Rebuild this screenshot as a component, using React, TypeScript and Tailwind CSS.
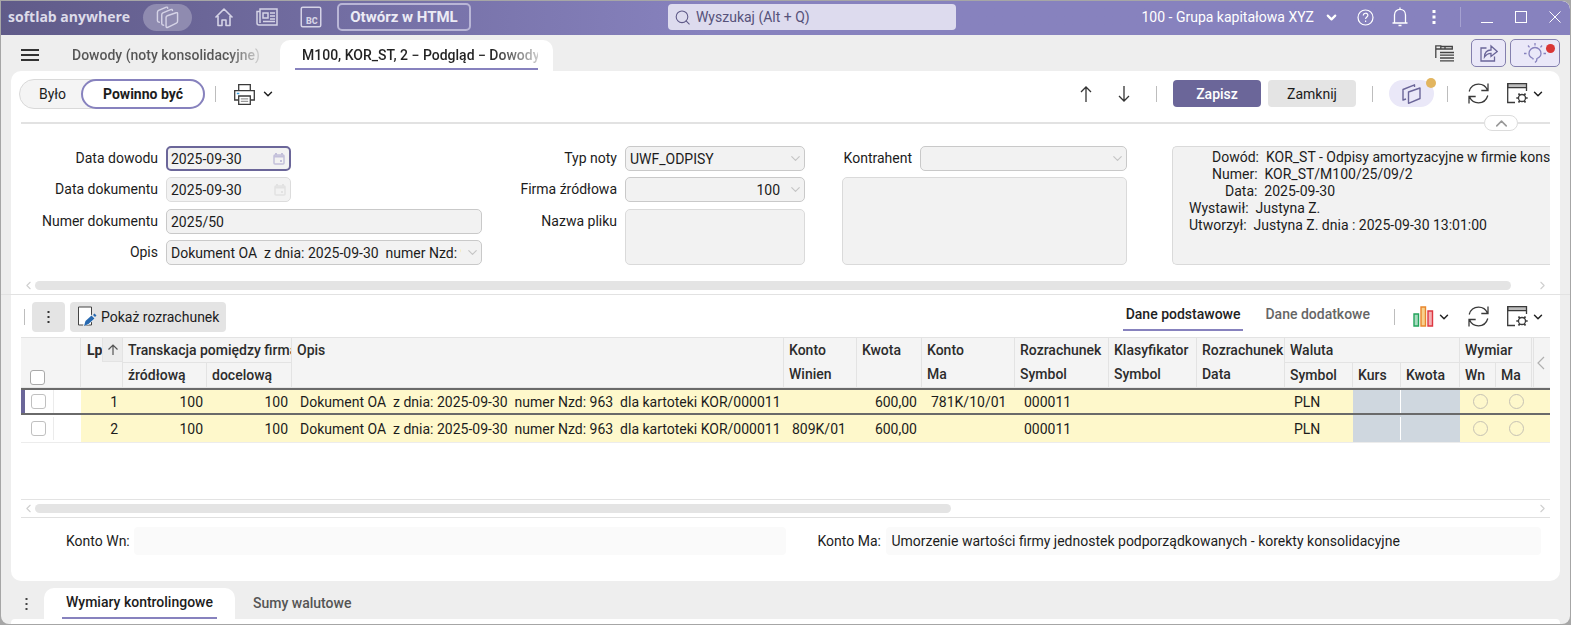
import type { ReactNode } from 'react';
import { ChevronDown, ChevronLeft, ChevronRight, ChevronUp, Search } from 'lucide-react';

const infoLines = [
  { label: 'Dowód:', value: 'KOR_ST - Odpisy amortyzacyjne w firmie konso', indent: 'pl-[39px]' },
  { label: 'Numer:', value: 'KOR_ST/M100/25/09/2', indent: 'pl-[39px]' },
  { label: 'Data:', value: '2025-09-30', indent: 'pl-[52px]' },
  { label: 'Wystawił:', value: 'Justyna Z.', indent: 'pl-4' },
  { label: 'Utworzył:', value: 'Justyna Z. dnia : 2025-09-30 13:01:00', indent: 'pl-4' },
];

const rows = [
  { lp: 1, from: '100', to: '100', opis: 'Dokument OA  z dnia: 2025-09-30  numer Nzd: 963  dla kartoteki KOR/000011', winien: '', kwota: '600,00', ma: '781K/10/01', symbol: '000011', waluta: 'PLN', active: true },
  { lp: 2, from: '100', to: '100', opis: 'Dokument OA  z dnia: 2025-09-30  numer Nzd: 963  dla kartoteki KOR/000011', winien: '809K/01', kwota: '600,00', ma: '', symbol: '000011', waluta: 'PLN', active: false },
];

const columns = [
  'w-[33px]', 'w-[27px]', 'w-[42px]', 'w-[84px]', 'w-[85px]', '', 'w-[73px]', 'w-[65px]', 'w-[93px]', 'w-[94px]',
  'w-[88px]', 'w-[88px]', 'w-[68px]', 'w-[48px]', 'w-[59px]', 'w-[36px]', 'w-[36px]', 'w-[2px]', 'w-[16px]',
];

function Divider({ className = '' }: { className?: string }) {
  return <span className={`w-px h-4 bg-[#bdbdbd] ${className}`} />;
}

function PagesIcon() {
  return (
    <svg width="23" height="23" viewBox="0 0 24 24" fill="none" stroke="#d5d3e6" strokeWidth="1.500" strokeLinejoin="round" strokeLinecap="round">
      <path d="M10.500 12c0-1 .5-1.500 1.300-1.800L21 7c1-.3 1.500 0 1.500 1v8c0 1-.3 1.500-1.200 1.900l-9 4.300c-1.200.5-1.800.1-1.800-1z" />
      <path d="M8 20c-1.500 0-2-.5-2-1.500V9c0-1 .4-1.500 1.200-1.900l8-3.300c1.300-.5 2-.2 2 1" />
      <path d="M3.500 17c-1.500 0-2-.5-2-1.500V6.500c0-1 .4-1.500 1.200-1.900l7.500-3.200c1.300-.5 2-.2 2 1" />
    </svg>
  );
}

function HomeIcon() {
  return (
    <svg width="20" height="20" viewBox="0 0 20 20" fill="none" stroke="#d5d3e6" strokeWidth="1.600" strokeLinejoin="round">
      <path d="M1.500 10.500 10 2l8.500 8.500M4 9v9.500h4V13h4v5.500h4V9" />
    </svg>
  );
}

function NewsIcon() {
  return (
    <svg width="22" height="18" viewBox="0 0 22 18" fill="none" stroke="#d5d3e6" strokeWidth="1.500">
      <path d="M4 3.500V1h17v16H3a2 2 0 0 1-2-2V3.500h3V15" />
      <path d="M7 5h5v5H7zM14 5h5M14 8h5M14 11h5M7 13.500h12" />
    </svg>
  );
}

function BcIcon() {
  return (
    <svg width="22" height="22" viewBox="0 0 22 22" fill="none">
      <rect x="1.250" y="1.250" width="19.500" height="19.500" rx="1.500" stroke="#d5d3e6" strokeWidth="1.500" />
      <text x="6" y="17.500" fontSize="9" fontWeight="900" fontFamily="Roboto, sans-serif" fill="#d5d3e6">BC</text>
    </svg>
  );
}

function PrinterIcon() {
  return (
    <svg width="21" height="21" viewBox="0 0 21 21" fill="none" stroke="#3a3a3a" strokeWidth="1.300">
      <path d="M4.700 6.500V.7h11.600v5.800M4.500 16H.7V6.700h19.600V16h-3.800" />
      <path d="M4.700 12h11.600v8.300H4.700z" fill="#fff" />
      <path d="M6.800 14.800h7.400M6.800 17.300h7.400" stroke="#999" />
      <path d="M2.800 9.500h2.500" stroke="#3b9fe0" />
    </svg>
  );
}

function RefreshIcon() {
  return (
    <svg width="21" height="21" viewBox="0 0 21 21" fill="none" stroke="#3a3a3a" strokeWidth="1.300">
      <path d="M1.200 8.500C2.500 4 6 1.200 10.500 1.200c4 0 7.500 2.300 9 6M20 .5v7h-6.700" />
      <path d="M19.800 12.500c-1.300 4.500-4.800 7.300-9.300 7.300-4 0-7.500-2.300-9-6M1 20.500v-7h6.700" />
    </svg>
  );
}

function WindowGearIcon() {
  return (
    <svg width="21" height="21" viewBox="0 0 21 21" fill="none" stroke="#3a3a3a" strokeWidth="1.300">
      <path d="M.7.7h18.800v4H.7z" fill="#bdbdbd" />
      <path d="M.7.700v18.800H8M19.500 4.700V8" />
      <circle cx="15" cy="15" r="3.500" />
      <path d="m12.800 12.200-1.300-1.800M17.200 12.200l1.300-1.800M12.800 17.800l-1.300 1.800M17.200 17.800l1.300 1.800M11.500 15H9.300M18.500 15h2.200" strokeWidth="1.700" />
    </svg>
  );
}

function CalendarIcon({ color }: { color: string }) {
  return (
    <svg width="12" height="12" viewBox="0 0 12 12" fill="none" stroke={color} strokeWidth="1.500" aria-hidden="true">
      <rect x="1" y="2" width="10" height="9" rx="1" />
      <path d="M1 3.500h10" strokeWidth="2" />
      <path d="M3 0v2M9 0v2M7 8h2" strokeWidth="2" />
    </svg>
  );
}

function ToolMenu({ label, children }: { label: string; children: ReactNode }) {
  return (
    <button type="button" aria-label={label} className="flex items-center gap-[3px]">
      {children}
      <ChevronDown size={14} strokeWidth={2.5} color="#222" />
    </button>
  );
}

function Field({ id, label, labelClass, children }: { id: string; label: string; labelClass: string; children: ReactNode }) {
  return (
    <div className="flex gap-2">
      <label htmlFor={id} className={`shrink-0 h-[25px] leading-[25px] text-right whitespace-nowrap ${labelClass}`}>{label}</label>
      {children}
    </div>
  );
}

function SelectBox({ id, value, className, right = false }: { id: string; value: string; className: string; right?: boolean }) {
  return (
    <div className={`relative ${className}`}>
      <select
        id={id}
        className={`w-full h-[25px] pl-1 appearance-none rounded-[5px] border border-[#c9c9c9] bg-[#f2f2f2] ${right ? 'pr-6 text-right' : 'pr-5'}`}
      >
        <option>{value}</option>
      </select>
      <ChevronDown size={15} strokeWidth={1.8} color="#c4c4c4" className="absolute right-0.5 top-[5px] pointer-events-none" />
    </div>
  );
}

function DateBox({ id, focused = false }: { id: string; focused?: boolean }) {
  return (
    <div
      className={`w-[125px] h-[25px] pr-1 flex items-center rounded-[5px] bg-[#f2f2f2] ${focused ? 'border-2 border-[#6b6699] pl-[3px]' : 'border border-[#dcdcdc] pl-1'}`}
    >
      <input id={id} type="text" defaultValue="2025-09-30" className="w-full min-w-0 bg-transparent outline-none" />
      <button type="button" aria-label="Kalendarz">
        <CalendarIcon color={focused ? '#c3c0da' : '#e2e2e2'} />
      </button>
    </div>
  );
}

function ScrollTrack({ children }: { children: ReactNode }) {
  return (
    <div className="flex items-center h-[17px] px-px">
      <ChevronLeft size={13} color="#cfcfcf" />
      <div className="flex-1 flex">{children}</div>
      <ChevronRight size={13} color="#cfcfcf" />
    </div>
  );
}

function TitleBar() {
  return (
    <header className="h-[34px] pb-0.5 flex items-center rounded-tr-lg bg-linear-to-r from-[#605b89] to-[#8782be] to-45% text-white">
      <div className="flex-1 flex items-center pl-[7px]">
        <span className="w-[135px] font-['Open_Sans',sans-serif] font-bold text-sm text-[#dddbe9] whitespace-nowrap">softlab anywhere</span>
        <button type="button" aria-label="Moduły" className="w-[49px] h-[27px] rounded-full bg-[#8f8bb0] flex items-center justify-center"><PagesIcon /></button>
        <nav className="flex items-center gap-[22px] ml-[22px]">
          <a href="#start" aria-label="Start"><HomeIcon /></a>
          <a href="#news" aria-label="Aktualności"><NewsIcon /></a>
          <a href="#bc" aria-label="BC"><BcIcon /></a>
        </nav>
        <button type="button" className="ml-[15px] w-[134px] h-7 rounded-[5px] border-2 border-[#b9b6d6] font-bold text-[15px] leading-5 text-[#ecebf5]">Otwórz w HTML</button>
      </div>
      <label className="w-[288px] h-[26px] ml-[54px] rounded bg-[#dddbee] flex items-center px-1.5 gap-[5px]">
        <Search size={19} strokeWidth={1.5} color="#5f5a88" />
        <input type="search" aria-label="Wyszukaj" placeholder="Wyszukaj (Alt + Q)" className="w-full bg-transparent outline-none text-sm placeholder:text-[#56527a]" />
      </label>
      <div className="flex-1 flex items-center justify-end pr-[9px]">
        <button type="button" className="flex items-center gap-2.5 text-sm whitespace-nowrap">
          100 - Grupa kapitałowa XYZ
          <ChevronDown size={15} strokeWidth={3.5} />
        </button>
        <button type="button" aria-label="Pomoc" className="ml-[18px]">
          <svg width="17" height="17" viewBox="0 0 17 17" fill="none" stroke="#fff" strokeWidth="1.200">
            <circle cx="8.500" cy="8.500" r="7.500" />
            <path d="M6.300 6.500c0-3 4.600-3 4.600-.2 0 1.600-2.300 1.700-2.300 3.700M8.600 11.500v1.500" />
          </svg>
        </button>
        <button type="button" aria-label="Powiadomienia" className="ml-[18px]">
          <svg width="16" height="20" viewBox="0 0 16 20" fill="none" stroke="#fff" strokeWidth="1.300">
            <path d="M.5 16h15M2.500 16V8c0-7.500 11-7.500 11 0v8M6.500 18.500h3M8 .5v2" />
          </svg>
        </button>
        <button type="button" aria-label="Więcej" className="ml-[24px] mr-6">
          <svg width="4" height="14" viewBox="0 0 4 14" fill="#fff"><path d="M.5 0h3v3h-3zM.5 5.500h3v3h-3zM.5 11h3v3h-3z" /></svg>
        </button>
        <span className="w-px h-5 bg-[#a5a1d0]" />
        <button type="button" aria-label="Minimalizuj" className="ml-5 w-3 h-3 border-b border-white" />
        <button type="button" aria-label="Maksymalizuj" className="ml-[22px] w-3 h-3 border border-white" />
        <button type="button" aria-label="Zamknij okno" className="ml-[22px]">
          <svg width="12" height="12" viewBox="0 0 12 12" stroke="#fff"><path d="m.5.5 11 11M11.500.5l-11 11" /></svg>
        </button>
      </div>
    </header>
  );
}

function TabBar() {
  return (
    <div className="h-9 flex items-end pl-5 pr-2.5">
      <button type="button" aria-label="Menu" className="w-[18px] mb-2.5 flex flex-col gap-[3px]">
        <span className="h-0.5 bg-[#333]" />
        <span className="h-0.5 bg-[#333]" />
        <span className="h-0.5 bg-[#333]" />
      </button>
      <div role="tablist" className="flex items-end ml-[33px] h-full text-sm font-medium">
        <button
          type="button"
          role="tab"
          className="w-[208px] h-8 text-left whitespace-nowrap bg-linear-to-r from-[#555] from-75% to-[#d0d0d0] to-90% bg-clip-text text-transparent"
        >
          Dowody (noty konsolidacyjne)
        </button>
        <button type="button" role="tab" aria-selected="true" className="w-[273px] h-[31px] rounded-t-[10px] bg-white px-[15px]">
          <span className="block h-[29px] pl-[7px] border-b-2 border-[#8782be] leading-[29px] text-left">
            <span className="block whitespace-nowrap bg-linear-to-r from-[#222] from-80% to-[#ccc] bg-clip-text text-transparent">M100, KOR_ST, 2 − Podgląd − Dowody</span>
          </span>
        </button>
      </div>
      <div className="flex-1 flex items-center justify-end h-full">
        <button type="button" aria-label="Widok" className="mr-[17px]">
          <svg width="19" height="17" viewBox="0 0 19 17" fill="none" stroke="#444" strokeWidth="1.300">
            <path d="M.8 13V.800h5V4h-5M5.800 1.500h11.500V4H5.800M10 1.500v2M5 7.500h14M5 10.200h14M5 13h14M5 15.800h14" />
          </svg>
        </button>
        <button type="button" aria-label="Udostępnij" className="w-[35px] h-7 mr-1 rounded-[5px] border border-[#8480ae] bg-[#eae8f8] flex items-center justify-center">
          <svg width="18" height="18" viewBox="0 0 18 18" fill="none" stroke="#6b6699" strokeWidth="1.300">
            <path d="M6.500 4H1v13h13.500v-4.500" />
            <path d="M4.500 13c.2-4.500 3-7 6.500-7V2l6.200 5.500L11 12.500V9.300c-2.500 0-4.700 1-6.500 3.700z" />
          </svg>
        </button>
        <button type="button" aria-label="Podpowiedzi" className="relative w-[50px] h-7 rounded-[5px] border border-[#8480ae] bg-[#eae8f8] flex items-center justify-center">
          <svg width="22" height="20" viewBox="0 0 22 20" fill="none" stroke="#8782be" strokeWidth="1.300">
            <path d="M9 16.500v-1c-2.500-1-4-3-4-5a6 6 0 0 1 12 0c0 2-1.500 4-4 5l-.5 2.500-1.500 1.500" />
            <path d="M11 0v2.500M4 2.500l1.500 1.800M18 2.500l-1.500 1.800M0 10.500h2.500M22 10.500h-2.500" />
          </svg>
          <span className="absolute right-1 top-1 w-[9px] h-[9px] rounded-full bg-[#d93636]" />
        </button>
      </div>
    </div>
  );
}

function Toolbar() {
  return (
    <div className="h-[52px] pt-2 flex items-start pl-2 pr-[15px]">
      <div className="w-[186px] h-[30px] flex rounded-full border border-[#d9d9d9] bg-[#f4f4f4] text-sm">
        <button type="button" className="flex-1 pl-1">Było</button>
        <button type="button" className="-my-px -mr-px w-[124px] h-[30px] rounded-full border-2 border-[#8782be] bg-white font-bold">Powinno być</button>
      </div>
      <div className="h-[30px] flex items-center">
        <Divider className="ml-2.5 mr-[18px]" />
        <button type="button" aria-label="Drukuj" className="flex items-center gap-1.5">
          <PrinterIcon />
          <ChevronDown size={14} strokeWidth={2.5} color="#222" />
        </button>
      </div>
      <div className="flex-1 h-[29px] flex items-center justify-end text-sm">
        <button type="button" aria-label="Poprzedni">
          <svg width="12" height="16" viewBox="0 0 12 16" fill="none" stroke="#333" strokeWidth="1.300"><path d="M6 16V1M1 6l5-5 5 5" /></svg>
        </button>
        <button type="button" aria-label="Następny" className="ml-[26px]">
          <svg width="12" height="16" viewBox="0 0 12 16" fill="none" stroke="#333" strokeWidth="1.300"><path d="M6 0v15M1 10l5 5 5-5" /></svg>
        </button>
        <Divider className="ml-[26px] mr-4" />
        <button type="button" className="w-[88px] h-[27px] rounded bg-[#6b6699] text-white font-medium">Zapisz</button>
        <button type="button" className="ml-[7px] w-[88px] h-[27px] rounded bg-[#e4e4e4]">Zamknij</button>
        <Divider className="mx-4" />
        <button type="button" aria-label="Kopiuj" className="relative w-[45px] h-[27px] rounded-full bg-[#eae8f8] flex items-center justify-center">
          <svg width="19" height="20" viewBox="0 0 19 20" fill="none" stroke="#6b6699" strokeWidth="1.400" strokeLinejoin="round">
            <path d="M6.500 8 18 4v10.500L6.500 19.300z" />
            <path d="M4 15 1 16V5.500L12.500.8V3" />
          </svg>
          <span className="absolute -right-0.5 -top-0.5 w-[10px] h-[10px] rounded-full bg-[#e2b55f]" />
        </button>
        <Divider className="ml-[13px] mr-5" />
        <button type="button" aria-label="Odśwież" className="mr-[18px]"><RefreshIcon /></button>
        <ToolMenu label="Ustawienia widoku"><WindowGearIcon /></ToolMenu>
      </div>
    </div>
  );
}

function DocumentForm() {
  return (
    <form className="flex px-2.5 pt-[15px] text-sm text-[#1c1c1c]">
      <div className="w-[461px] shrink-0 grid grid-rows-[25px_26px_25px_25px] gap-y-1.5">
        <Field id="data-dowodu" label="Data dowodu" labelClass="w-[137px]"><DateBox id="data-dowodu" focused /></Field>
        <Field id="data-dokumentu" label="Data dokumentu" labelClass="w-[137px]"><DateBox id="data-dokumentu" /></Field>
        <Field id="numer" label="Numer dokumentu" labelClass="w-[137px]">
          <input id="numer" type="text" defaultValue="2025/50" className="flex-1 h-[25px] px-1 rounded-[5px] border border-[#c9c9c9] bg-[#f2f2f2]" />
        </Field>
        <Field id="opis" label="Opis" labelClass="w-[137px]">
          <SelectBox id="opis" value={'Dokument OA \u00a0z dnia: 2025-09-30 \u00a0numer Nzd: 963 \u00a0dla kartoteki KOR/000011'} className="w-[316px]" />
        </Field>
      </div>
      <div className="w-[323px] shrink-0 grid grid-rows-[25px_26px_56px] gap-y-1.5">
        <Field id="typ" label="Typ noty" labelClass="w-[135px]"><SelectBox id="typ" value="UWF_ODPISY" className="flex-1" /></Field>
        <Field id="firma" label="Firma źródłowa" labelClass="w-[135px]"><SelectBox id="firma" value="100" right className="flex-1" /></Field>
        <Field id="plik" label="Nazwa pliku" labelClass="w-[135px]">
          <textarea id="plik" className="flex-1 h-14 resize-none rounded-[5px] border border-[#dadada] bg-[#f2f2f2]" />
        </Field>
      </div>
      <div className="w-[285px] ml-[37px] shrink-0 grid grid-rows-[25px_88px] gap-y-1.5">
        <Field id="kontrahent" label="Kontrahent" labelClass="w-[70px]"><SelectBox id="kontrahent" value="" className="flex-1" /></Field>
        <textarea aria-label="Dane kontrahenta" className="resize-none rounded-[5px] border border-[#dadada] bg-[#f2f2f2]" />
      </div>
      <div className="flex-1 min-w-0 ml-[45px] pt-0.5 overflow-hidden rounded-l-[5px] border border-r-0 border-[#dadada] bg-[#f2f2f2] whitespace-pre leading-[17px]">
        {infoLines.map((line) => (
          <p key={line.label} className={line.indent}>{line.label}  {line.value}</p>
        ))}
      </div>
    </form>
  );
}

function GridToolbar() {
  return (
    <div className="h-[42px] pt-px flex items-center pl-[13px] pr-[15px] text-sm">
      <Divider />
      <button type="button" aria-label="Menu tabeli" className="ml-[7px] w-[33px] h-[30px] rounded bg-[#e4e4e4] flex items-center justify-center">
        <svg width="3" height="12" viewBox="0 0 3 12" fill="#333"><path d="M.5 0h2v2h-2zM.5 5h2v2h-2zM.5 10h2v2h-2z" /></svg>
      </button>
      <button type="button" className="ml-[5px] h-[30px] px-[7px] rounded bg-[#e4e4e4] flex items-center gap-1">
        <svg width="20" height="21" viewBox="0 0 20 21" fill="none">
          <path d="M1.500 1h13v18h-13z" fill="#fff" stroke="#444" />
          <path d="m6 20 1.500-6L14 8.500l4 4-6 6z" fill="#fff" />
          <path d="m7 20 1.500-5 6-5.500 3 3-6 5.500z" fill="#2769b0" />
          <path d="m16 9 1.500-1.500 2 2L18 11z" fill="#2769b0" />
        </svg>
        Pokaż rozrachunek
      </button>
      <div className="flex-1 flex items-center justify-end">
        <div role="tablist" className="flex h-[29px] font-medium">
          <button type="button" role="tab" aria-selected="true" className="px-[3px] pb-1 border-b-2 border-[#8782be] text-[#222]">Dane podstawowe</button>
          <button type="button" role="tab" className="ml-[18px] px-1 pb-1.5 text-[#666]">Dane dodatkowe</button>
        </div>
        <Divider className="ml-5 mr-[18px]" />
        <ToolMenu label="Wykres">
          <svg width="21" height="21" viewBox="0 0 21 21" strokeWidth="1.400">
            <path d="M1 8h4.500v12H1z" fill="#a8dcc0" stroke="#23a45c" />
            <path d="M8 1h4.500v19H8z" fill="#f8d08c" stroke="#e8862c" />
            <path d="M15 5h4.500v15H15z" fill="#f5b0b4" stroke="#dd3740" />
          </svg>
        </ToolMenu>
        <button type="button" aria-label="Odśwież tabelę" className="ml-[17px] mr-[18px]"><RefreshIcon /></button>
        <ToolMenu label="Ustawienia tabeli"><WindowGearIcon /></ToolMenu>
      </div>
    </div>
  );
}

const th = 'pl-[5px] border-r border-[#e3e3e3] text-left align-top font-medium leading-6 whitespace-nowrap overflow-hidden';

function EntriesTable() {
  return (
    <table className="w-full table-fixed border-separate border-spacing-0 text-sm text-[#1c1c1c]">
      <colgroup>
        {columns.map((width, i) => <col key={i} className={width} />)}
      </colgroup>
      <thead className="bg-[#f4f4f4] text-[#2c2c2c]">
        <tr className="h-6">
          <th rowSpan={2} colSpan={2} className="border-r border-[#e3e3e3] align-bottom text-left pl-[9px] pb-0.5">
            <input type="checkbox" aria-label="Zaznacz wszystkie" className="block w-[15px] h-[15px] appearance-none rounded-[3px] border border-[#a9a9a9] bg-white" />
          </th>
          <th rowSpan={2} className="border-r border-[#e3e3e3] align-top font-bold">
            <div className="flex justify-between pl-[6px] leading-6">
              Lp
              <button type="button" aria-label="Sortuj" className="w-[21px] h-6 border border-t-0 border-r-0 border-[#e3e3e3] bg-[#ececec] flex items-center justify-center">
                <svg width="10" height="11" viewBox="0 0 10 11" fill="none" stroke="#555" strokeWidth="1.200"><path d="M5 11V1M.5 5.500 5 1l4.500 4.500" /></svg>
              </button>
            </div>
          </th>
          <th colSpan={2} className={`${th} border-b`}>Transkacja pomiędzy firma</th>
          <th rowSpan={2} className={th}>Opis</th>
          <th rowSpan={2} className={th}>Konto<br />Winien</th>
          <th rowSpan={2} className={th}>Kwota</th>
          <th rowSpan={2} className={th}>Konto<br />Ma</th>
          <th rowSpan={2} className={th}>Rozrachunek<br />Symbol</th>
          <th rowSpan={2} className={th}>Klasyfikator<br />Symbol</th>
          <th rowSpan={2} className={th}>Rozrachunek<br />Data</th>
          <th colSpan={3} className={`${th} border-b`}>Waluta</th>
          <th colSpan={2} className={`${th} border-b`}>Wymiar</th>
          <th rowSpan={2} className="border-r border-[#e3e3e3]" />
          <th rowSpan={2}>
            <button type="button" aria-label="Zwiń kolumny" className="block">
              <svg width="12" height="14" viewBox="0 0 12 14" fill="none" stroke="#b0b0b0" strokeWidth="1.200"><path d="M10 1 4 7l6 6" /></svg>
            </button>
          </th>
        </tr>
        <tr className="h-6">
          <th className={th}>źródłową</th>
          <th className={th}>docelową</th>
          <th className={th}>Symbol</th>
          <th className={th}>Kurs</th>
          <th className={th}>Kwota</th>
          <th className={th}>Wn</th>
          <th className={th}>Ma</th>
        </tr>
        <tr className="h-px bg-[#e6e6e6]"><td colSpan={19} /></tr>
      </thead>
      <tbody>
        {rows.map((row) => {
          const line = row.active ? 'h-[27px] border-y-2 border-[#6a6a6a]' : 'h-7 border-b border-b-[#ececec]';
          const cell = `${line} bg-[#fef8cb] whitespace-pre overflow-hidden leading-5`;
          return (
            <tr key={row.lp}>
              <td className={line}>
                <div className={`flex items-center h-[23px] pl-1.5 ${row.active ? 'border-l-4 border-[#6b6699]' : 'ml-1'} border-r border-r-[#ebebeb]`}>
                  <input type="checkbox" aria-label={`Zaznacz wiersz ${row.lp}`} className="block w-[15px] h-[15px] appearance-none rounded-[3px] border border-[#c0c0c0] bg-white" />
                </div>
              </td>
              <td className={line} />
              <td className={`${cell} pr-[5px] text-right`}>{row.lp}</td>
              <td className={`${cell} pr-1 text-right`}>{row.from}</td>
              <td className={`${cell} pr-1 text-right`}>{row.to}</td>
              <td className={`${cell} pl-2`}>{row.opis}</td>
              <td className={`${cell} pl-2`}>{row.winien}</td>
              <td className={`${cell} pr-[5px] text-right`}>{row.kwota}</td>
              <td className={`${cell} pl-[9px]`}>{row.ma}</td>
              <td className={`${cell} pl-[9px]`}>{row.symbol}</td>
              <td className={cell} />
              <td className={cell} />
              <td className={`${cell} pl-[9px]`}>{row.waluta}</td>
              <td className={`${line} bg-[#cfd7df]`}><div className="h-[23px] border-r border-white" /></td>
              <td className={`${line} bg-[#cfd7df]`} />
              {['Wn', 'Ma'].map((side) => (
                <td key={side} className={cell}>
                  <input type="radio" name={`wymiar-${row.lp}`} aria-label={side} className="block ml-[13px] w-[15px] h-[15px] appearance-none rounded-full border border-[#c6c2b4]" />
                </td>
              ))}
              <td className={cell} />
              <td className={cell} />
            </tr>
          );
        })}
      </tbody>
    </table>
  );
}

export default function App() {
  return (
    <div className="min-h-screen flex bg-[#a6a6a6] p-px font-['Roboto',sans-serif] text-[#1c1c1c]">
      <div className="flex-1 min-w-0 flex flex-col rounded-b-lg rounded-tr-lg overflow-hidden bg-[#eeeeee]">
        <TitleBar />
        <TabBar />
        <main className="mx-2.5 flex-1 flex flex-col rounded-[10px] bg-white">
          <Toolbar />
          <div className="px-2.5 flex items-center h-0">
            <span className="flex-1 h-0.5 bg-[#e2e2e2]" />
            <button type="button" aria-label="Zwiń nagłówek" className="w-[34px] h-4 rounded-full border border-[#dcdcdc] bg-white flex items-center justify-center">
              <ChevronUp size={19} color="#999" />
            </button>
            <span className="w-8 h-0.5 bg-[#e2e2e2]" />
          </div>
          <div className="pt-2">
            <DocumentForm />
          </div>
          <div className="px-2.5 pt-3">
            <ScrollTrack><span className="flex-1 h-[9px] mr-[25px] rounded-full bg-[#e4e4e4]" /></ScrollTrack>
          </div>
          <div className="-mx-2.5 h-px bg-[#e2e2e2]" />
          <GridToolbar />
          <div className="mx-2.5 h-[163px] border-t border-b border-[#e3e3e3]">
            <EntriesTable />
          </div>
          <div className="mx-2.5 border-b border-[#e0e0e0]">
            <ScrollTrack><span className="w-[61%] h-[9px] rounded-full bg-[#e4e4e4]" /></ScrollTrack>
          </div>
          <div className="flex items-center pt-[9px] pl-[55px] pr-[19px] text-sm">
            <label htmlFor="konto-wn" className="w-[68px]">Konto Wn:</label>
            <input id="konto-wn" type="text" readOnly className="flex-1 min-w-0 h-7 px-1 rounded bg-[#fafafa]" />
            <label htmlFor="konto-ma" className="ml-8 w-[68px]">Konto Ma:</label>
            <input
              id="konto-ma"
              type="text"
              readOnly
              value="Umorzenie wartości firmy jednostek podporządkowanych - korekty konsolidacyjne"
              className="flex-1 min-w-0 h-7 px-1.5 rounded bg-[#fafafa]"
            />
          </div>
        </main>
        <div className="h-[38px] pt-[7px] flex text-sm font-medium">
          <button type="button" aria-label="Menu paneli" className="w-[43px] pl-2 flex items-center justify-center">
            <svg width="3" height="12" viewBox="0 0 3 12" fill="#444"><path d="M.5 0h2v2h-2zM.5 5h2v2h-2zM.5 10h2v2h-2z" /></svg>
          </button>
          <div role="tablist" className="flex">
            <button type="button" role="tab" aria-selected="true" className="w-[191px] h-[31px] px-[18px] rounded-t-[10px] bg-white">
              <span className="block h-[31px] border-b-2 border-[#8782be] leading-[29px]">Wymiary kontrolingowe</span>
            </button>
            <button type="button" role="tab" className="px-[18px] text-[#555] leading-[29px]">Sumy walutowe</button>
          </div>
        </div>
        <div className="mx-2.5 h-[5px] rounded-t bg-white" />
      </div>
    </div>
  );
}
